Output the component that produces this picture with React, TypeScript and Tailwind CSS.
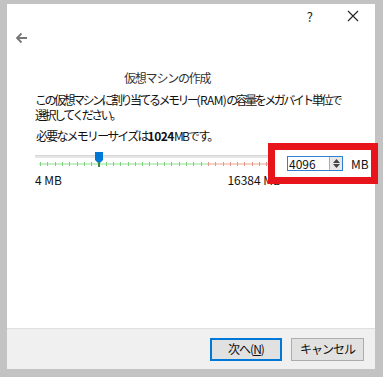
import React from "react";

const font = { fontFamily: '"Noto Sans CJK JP", "Noto Sans", sans-serif' };

function SliderTrack() {
  // tick marks under the groove
  const ticks: number[] = [];
  for (let x = 5; x < 240; x += 7.3) ticks.push(Math.round(x));
  return (
    <svg width="240" height="16" className="block">
      <rect x="0" y="3" width="240" height="3" fill="#e6e6e6" />
      <rect x="0" y="3" width="240" height="1" fill="#d6d6d6" />
      <rect x="4" y="11" width="168" height="2" fill="#c8f0c8" />
      <rect x="172" y="11" width="68" height="2" fill="#f6d2c6" />
      {ticks.map((x) => (
        <rect key={x} x={x} y="10" width="1" height="4" fill={x < 172 ? "#7fcf7f" : "#e09a8a"} />
      ))}
      <path d="M60 0 h8 v8 l-4 4 l-4 -4 z" fill="#0078d7" />
      <rect x="63" y="10" width="2" height="5" fill="#3c8a3c" />
    </svg>
  );
}

export default function App() {
  return (
    <div className="w-[383px] h-[377px] bg-[#c3c3c3] pl-[7px] pt-[4px] overflow-hidden" style={font}>
      <div className="relative w-[368px] h-[365px] bg-white flex flex-col text-[12px] text-[#111]">
        {/* title bar */}
        <div className="h-[24px] flex items-center justify-end pr-[16px] gap-[34px] text-[#222]">
          <span className="text-[13px] leading-none">?</span>
          <svg width="12" height="12" viewBox="0 0 12 12">
            <path d="M1 1 L11 11 M11 1 L1 11" stroke="#222" strokeWidth="1.1" />
          </svg>
        </div>
        <div className="h-[20px] pl-[8px] flex items-center">
          <svg width="13" height="12" viewBox="0 0 13 12">
            <path d="M12 6 H2 M6.5 1.5 L2 6 L6.5 10.5" stroke="#777" strokeWidth="1.8" fill="none" />
          </svg>
        </div>

        <div className="pl-[117px] mt-[22px] text-[#333] leading-[15px] tracking-[-1.2px] whitespace-nowrap">仮想マシンの作成</div>

        <div className="pl-[28px] mt-[7px] leading-[15px] tracking-[-2.5px] whitespace-nowrap">
          この仮想マシンに割り当てるメモリー<span className="tracking-[-0.6px]">(RAM)</span>の容量をメガバイト単位で
          <br />
          選択してください。
        </div>
        <div className="pl-[29px] mt-[6px] leading-[15px] tracking-[-1.8px] whitespace-nowrap">
          必要なメモリーサイズは<b className="tracking-[-0.5px]">1024</b>MBです。
        </div>

        <div className="pl-[28px] mt-[9px] flex items-start">
          <div className="flex flex-col">
            <SliderTrack />
            <div className="flex justify-between w-[246px] mt-[5px] leading-[14px]">
              <span>4 MB</span>
              <span>16384 MB</span>
            </div>
          </div>
        </div>

        {/* highlighted spin box */}
        <div className="absolute left-[261px] top-[139px] w-[110px] h-[41px] border-[7px] border-[#e8141c] bg-white flex items-center pl-[12px] gap-[8px]">
          <div className="w-[56px] h-[15px] border border-[#2f7fd4] flex items-stretch">
            <span className="flex-1 pl-[1px] text-[12px] leading-[13px]">4096</span>
            <div className="w-[13px] border-l border-[#adadad] bg-[#e8e8e8] flex flex-col items-center justify-center gap-[1px]">
              <svg width="7" height="4"><path d="M0 4 L3.5 0 L7 4 z" fill="#444" /></svg>
              <svg width="7" height="4"><path d="M0 0 L3.5 4 L7 0 z" fill="#444" /></svg>
            </div>
          </div>
          <span className="leading-none">MB</span>
        </div>

        {/* footer */}
        <div className="mt-auto h-[41px] bg-[#f0f0f0] border-t border-[#dfdfdf] flex items-center justify-end pr-[11px] gap-[9px]">
          <button className="w-[72px] h-[23px] bg-[#e1e1e1] border-2 border-[#0078d7] text-[12px] leading-none tracking-[-1px]">
            次へ(<u>N</u>)
          </button>
          <button className="w-[73px] h-[23px] bg-[#e1e1e1] border border-[#adadad] text-[12px] leading-none tracking-[-1px]">
            キャンセル
          </button>
        </div>
      </div>
    </div>
  );
}
